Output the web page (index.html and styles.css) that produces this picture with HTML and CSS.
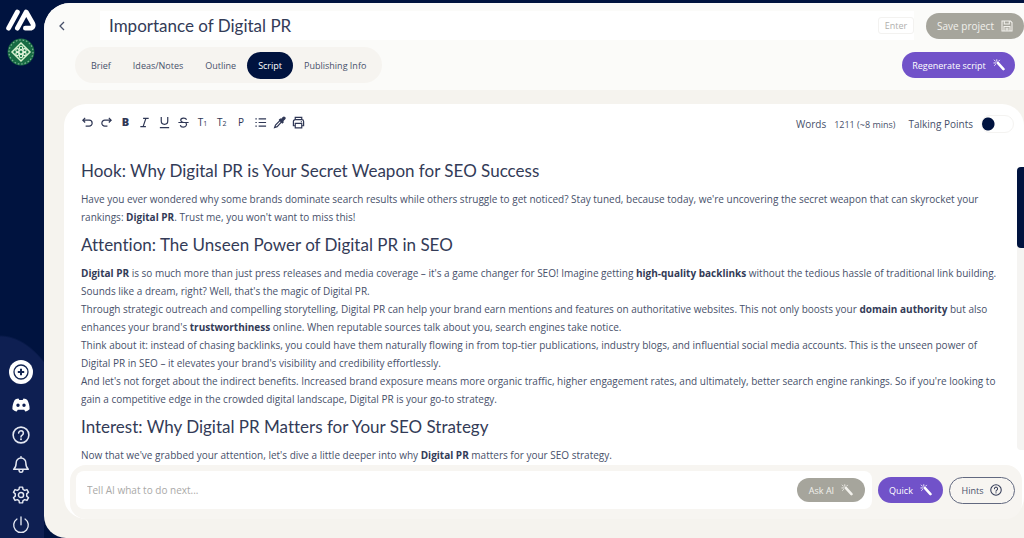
FILE: index.html
```html
<!DOCTYPE html>
<html lang="en">
<head>
<meta charset="utf-8">
<meta name="viewport" content="width=device-width, initial-scale=1">
<title>Importance of Digital PR</title>
<link rel="stylesheet" href="styles.css">
</head>
<body>
<svg class="defs" aria-hidden="true">
  <symbol id="wand" viewBox="0 0 14 14"><path d="M5.600 4.600 12.200 11.800" stroke="currentColor" stroke-width="3" stroke-linecap="round"/><path d="M1 4.600h2M4.400.8v1.800M1.400 1.200l1.400 1.400M7.600 1.400 6.600 2.500M1.800 7.600l1.200-1.200" stroke="currentColor" stroke-width="1" stroke-linecap="round"/></symbol>
  <symbol id="help" viewBox="0 0 16 16"><circle cx="8" cy="8" r="7" fill="none" stroke="currentColor" stroke-width="1.4"/><path d="M5.900 6.300a2.100 2.100 0 1 1 3.200 1.800c-.8.5-1.100.8-1.100 1.600" fill="none" stroke="currentColor" stroke-width="1.4" stroke-linecap="round"/><circle cx="8" cy="11.800" r=".9" fill="currentColor"/></symbol>
</svg>
<div class="app">
  <nav class="sidebar" aria-label="Main">
    <div class="side-group side-top">
      <a href="#" aria-label="Home"><svg class="logo" viewBox="0 0 30 22" fill="none" stroke="#fff" stroke-width="4.800" stroke-linecap="round" stroke-linejoin="round"><path d="M2.600 19.200 11.400 3M11.400 19.200 20.200 3l6.400 11.200c1.400 2.600.2 5-2.600 5h-4.600"/></svg></a>
      <a href="#" aria-label="Workspace"><svg class="avatar" viewBox="0 0 28 28" fill="none"><circle cx="14" cy="14" r="13.400" fill="#176b43"/><circle cx="14" cy="14" r="12" stroke="#7fb296" stroke-width="1.200" stroke-dasharray="1.600 1.800"/><path d="m14 5 9 9-9 9-9-9z" fill="#1b7a49" stroke="#d8f2cf" stroke-width="1.500"/><g stroke="#e7f7df" stroke-width="1.100"><circle cx="14" cy="14" r="2"/><circle cx="14" cy="10" r="1.700"/><circle cx="14" cy="18" r="1.700"/><circle cx="10.400" cy="12.200" r="1.600"/><circle cx="17.600" cy="12.200" r="1.600"/><circle cx="10.400" cy="16" r="1.600"/><circle cx="17.600" cy="16" r="1.600"/></g></svg></a>
    </div>
    <div class="side-group side-bottom">
      <button class="side-btn add" aria-label="Add"><svg viewBox="0 0 24 24"><circle cx="12" cy="12" r="12" fill="#fff"/><circle cx="12" cy="12" r="7" fill="none" stroke="#142653" stroke-width="1.300"/><path d="M12 8.800v6.400M8.800 12h6.400" stroke="#142653" stroke-width="2"/></svg></button>
      <button class="side-btn" aria-label="Discord"><svg viewBox="0 0 18 18"><path fill="#fff" fill-rule="evenodd" d="M6.500 2.600C4.700 2.900 3.400 3.400 2.700 3.900 1.200 6.300.4 9.500.4 13.200c1.300 1.300 2.700 2 4.300 2.300l1.100-1.800h6.400l1.100 1.800c1.600-.3 3-1 4.300-2.300 0-3.700-.8-6.900-2.300-9.300-.7-.5-2-1-3.800-1.300l-.8 1.500H7.300zM6 7.400a1.700 1.800 0 1 0 0 3.600 1.700 1.800 0 0 0 0-3.600m6 0a1.700 1.800 0 1 0 0 3.600 1.700 1.800 0 0 0 0-3.600"/></svg></button>
      <button class="side-btn" aria-label="Help"><svg><use href="#help"/></svg></button>
      <button class="side-btn" aria-label="Notifications"><svg viewBox="0 0 16 16" fill="none" stroke="currentColor" stroke-width="1.300" stroke-linejoin="round" stroke-linecap="round"><path d="M8 1.800c-2.600 0-4.300 2-4.300 4.400 0 3-.8 4.400-2.200 5.600h13c-1.400-1.200-2.200-2.600-2.200-5.600 0-2.400-1.700-4.400-4.300-4.400zM8 1.800V.6M6.200 12c0 3.400 3.600 3.400 3.600 0"/></svg></button>
      <button class="side-btn" aria-label="Settings"><svg viewBox="0 0 16 16" fill="none" stroke="currentColor" stroke-width="1.300" stroke-linejoin="round"><path d="m6.600 1-.4 2-1.500.9-2-.7-1.400 2.400L2.900 7v2l-1.600 1.400 1.400 2.400 2-.7 1.500.9.400 2h2.800l.4-2 1.500-.9 2 .7 1.400-2.400L13.100 9V7l1.600-1.400-1.400-2.400-2 .7-1.500-.9-.4-2z"/><circle cx="8" cy="8" r="2.300"/></svg></button>
      <button class="side-btn" aria-label="Log out"><svg viewBox="0 0 16 16" fill="none" stroke="currentColor" stroke-width="1.200" stroke-linecap="round"><path d="M8 .8v7M4.400 2.700a6.500 6.500 0 1 0 7.200 0"/></svg></button>
    </div>
  </nav>

  <main class="main">
    <header class="header">
      <div class="title-row">
        <button class="back" aria-label="Back"><svg viewBox="0 0 8 10" fill="none" stroke="currentColor" stroke-width="1.300"><path d="M6 1 2 5l4 4"/></svg></button>
        <div class="title-field">
          <input class="title-input" type="text" aria-label="Project title" value="Importance of Digital PR">
          <button class="enter">Enter</button>
        </div>
        <button class="pill save">Save project<svg viewBox="0 0 12 12" fill="none" stroke="currentColor" stroke-width="1.100"><path d="M1 1h8.500L11 2.500V11H1zM3.300 1v3h5V1M3 11V6.500h6V11M4.500 8.200h3M4.500 9.700h3"/></svg></button>
      </div>
      <div class="tab-row">
        <div class="tabs">
          <button class="tab">Brief</button>
          <button class="tab">Ideas/Notes</button>
          <button class="tab">Outline</button>
          <button class="tab active" aria-current="page">Script</button>
          <button class="tab">Publishing Info</button>
        </div>
        <button class="pill purple regenerate">Regenerate script<svg><use href="#wand"/></svg></button>
      </div>
    </header>

    <section class="editor">
      <div class="editor-bar">
        <div class="tools">
          <button class="tool" aria-label="Undo"><svg viewBox="0 0 14 14"><path d="M4.500 2 2 4.500 4.500 7M2.200 4.500h6.600a3.200 3.200 0 0 1 0 6.400H5"/></svg></button>
          <button class="tool" aria-label="Redo"><svg viewBox="0 0 14 14"><path d="M9.500 2 12 4.500 9.500 7M11.800 4.500H5.200a3.200 3.200 0 0 0 0 6.400H8"/></svg></button>
          <button class="tool bold">B</button>
          <button class="tool" aria-label="Italic"><svg viewBox="0 0 14 14"><path d="M5.500 2.500h6M2.500 11.500h6M8.500 2.500l-3 9"/></svg></button>
          <button class="tool" aria-label="Underline"><svg viewBox="0 0 14 14"><path d="M3.500 1v4.500a3.500 3.500 0 0 0 7 0V1M2 12.500h10"/></svg></button>
          <button class="tool" aria-label="Strikethrough"><svg viewBox="0 0 14 14"><path d="M10.300 4C9.500 1.500 4 1.700 4 4.500c0 1.500 1.500 2 3 2.500M1.500 7h11M9.500 7.500c2 2-.2 4.500-2.700 4.500-1.700 0-2.900-.8-3.200-2.200"/></svg></button>
          <button class="tool">T<small>1</small></button>
          <button class="tool">T<small>2</small></button>
          <button class="tool">P</button>
          <button class="tool" aria-label="List"><svg viewBox="0 0 14 14"><path d="M5 3h8M5 7h8M5 11h8M1.500 3H3M1.500 7H3M1.500 11H3"/></svg></button>
          <button class="tool" aria-label="Highlight"><svg viewBox="0 0 14 14"><path d="m8 4.500 1.500 1.500-5 5.500-2.800 1 1-2.800z"/><path class="solid" d="m7 4.300 1-1 .8.700L11 1.500c1-1 2.600.5 1.700 1.600L10.300 5.500l.7.800-1 1z"/></svg></button>
          <button class="tool" aria-label="Print"><svg viewBox="0 0 14 14"><path d="M3.500 4V1.500h7V4M3.500 10.500h-2V6a2 2 0 0 1 2-2h7a2 2 0 0 1 2 2v4.500h-2M3.500 8h7v4.800h-7zM9.500 6h1"/></svg></button>
        </div>
        <div class="stats">
          <span>Words</span><span class="count">1211 (~8 mins)</span>
          <label for="talking">Talking Points</label>
          <input class="switch" id="talking" type="checkbox">
        </div>
      </div>
      <div class="viewport">
        <article class="doc">
          <h2>Hook: Why Digital PR is Your Secret Weapon for SEO Success</h2>
          <p>Have you ever wondered why some brands dominate search results while others struggle to get noticed? Stay tuned, because today, we're uncovering the secret weapon that can skyrocket your rankings: <strong>Digital PR</strong>. Trust me, you won't want to miss this!</p>
          <h2>Attention: The Unseen Power of Digital PR in SEO</h2>
          <p><strong>Digital PR</strong> is so much more than just press releases and media coverage – it's a game changer for SEO! Imagine getting <strong>high-quality backlinks</strong> without the tedious hassle of traditional link building. Sounds like a dream, right? Well, that's the magic of Digital PR.</p>
          <p>Through strategic outreach and compelling storytelling, Digital PR can help your brand earn mentions and features on authoritative websites. This not only boosts your <strong>domain authority</strong> but also enhances your brand's <strong>trustworthiness</strong> online. When reputable sources talk about you, search engines take notice.</p>
          <p>Think about it: instead of chasing backlinks, you could have them naturally flowing in from top-tier publications, industry blogs, and influential social media accounts. This is the unseen power of Digital PR in SEO – it elevates your brand's visibility and credibility effortlessly.</p>
          <p>And let's not forget about the indirect benefits. Increased brand exposure means more organic traffic, higher engagement rates, and ultimately, better search engine rankings. So if you're looking to<br>gain a competitive edge in the crowded digital landscape, Digital PR is your go-to strategy.</p>
          <h2>Interest: Why Digital PR Matters for Your SEO Strategy</h2>
          <p>Now that we've grabbed your attention, let's dive a little deeper into why <strong>Digital PR</strong> matters for your SEO strategy.</p>
        </article>
        <div class="track"><div class="thumb"></div></div>
      </div>
      <form class="ai-bar">
        <div class="ai-field">
          <input class="ai-input" type="text" aria-label="Tell AI what to do next" placeholder="Tell AI what to do next...">
          <button type="button" class="pill ask">Ask AI<svg><use href="#wand"/></svg></button>
        </div>
        <button type="button" class="pill purple quick">Quick<svg><use href="#wand"/></svg></button>
        <button type="button" class="pill hints">Hints<svg><use href="#help"/></svg></button>
      </form>
    </section>
  </main>
</div>
</body>
</html>
```

FILE: styles.css
```css
* { box-sizing: border-box; }
body {
  margin: 0;
  font-family: "Open Sans", "Noto Sans", sans-serif;
  font-size: 10px;
  color: #47506a;
  background: #00133f;
}
button, input { font: inherit; color: inherit; margin: 0; }
button { border: 0; padding: 0; background: none; cursor: pointer; white-space: nowrap; }
svg { display: block; fill: none; }
.defs { position: absolute; width: 0; height: 0; }

.app { display: flex; height: 100vh; padding-top: 3px; background: #00133f; }
.sidebar {
  flex: 0 0 44px;
  display: flex;
  flex-direction: column;
  justify-content: space-between;
  margin-top: -3px;
  background: radial-gradient(ellipse 90px 203px at 0 100%, #0e1f52 0, #0e1f52 99%, #00133f 100%);
}
.side-group { display: flex; flex-direction: column; align-items: center; padding-right: 3px; }
.side-top { gap: 7px; padding-top: 9px; }
.side-bottom { gap: 12px; padding-bottom: 4px; color: #e4e8f2; }
.logo { width: 30px; height: 22px; }
.avatar { width: 28px; height: 28px; }
.side-btn svg { width: 18px; height: 18px; }
.side-btn.add svg { width: 24px; height: 24px; }

.main {
  flex: 1;
  min-width: 0;
  display: flex;
  flex-direction: column;
  background: #f5f3ee;
  border-radius: 26px 0 0 22px;
  overflow: hidden;
}
.header { background: #fbfbf9; padding-bottom: 7px; }
.title-row { display: flex; align-items: center; padding: 8px 0 0 10px; }
.back { width: 16px; height: 28px; display: grid; place-items: center; }
.back svg { width: 8px; height: 10px; }
.title-field { flex: 1; display: flex; align-items: center; margin: 0 12px 0 30px; background: #fff; }
.title-input {
  flex: 1;
  min-width: 0;
  height: 29px;
  padding: 0 9px;
  border: 0;
  background: none;
  font-family: Lato, sans-serif;
  font-size: 17px;
  color: #333b57;
}
.enter { width: 36px; height: 17px; border: 1px solid #f3f2f0; border-radius: 3px; font-size: 9px; line-height: 12px; color: #b0afad; }

.pill { display: flex; align-items: center; justify-content: center; gap: 7px; border-radius: 14px; color: #fff; font-size: 9px; }
.pill svg { width: 12px; height: 12px; flex: none; }
.save { width: 98px; height: 26px; background: #a6a59c; font-size: 10px; color: #f2f1ec; }
.purple { background: #7152c9; }

.tab-row { display: flex; align-items: center; justify-content: space-between; padding: 7px 9px 0 31px; }
.tabs { display: flex; align-items: center; height: 36px; padding: 0 5px; border-radius: 18px; background: #f6f4f0; }
.tab { height: 27px; padding: 0 11px; border-radius: 14px; font-size: 9px; }
.tab.active { background: #00133f; color: #fff; }
.regenerate { width: 113px; height: 26px; }

.editor {
  flex: 1;
  min-height: 0;
  display: flex;
  flex-direction: column;
  margin: 14px 0 19px 20px;
  border-radius: 22px;
  background: #fff;
}
.editor-bar { display: flex; align-items: flex-start; justify-content: space-between; padding: 9px 10px 0 16px; height: 30px; }
.tools { display: flex; justify-content: space-between; width: 226px; color: #2f3755; }
.tool { width: 14px; height: 18px; display: flex; align-items: center; justify-content: center; line-height: 12px; }
.tool svg { width: 13px; height: 13px; stroke: currentColor; stroke-width: 1.3; }
.tool small { font-size: 7px; line-height: 8px; padding-top: 4px; }
.tool .solid { fill: currentColor; }
.bold { font-weight: 800; font-size: 11px; }
.stats { display: flex; align-items: center; gap: 8px; padding-top: 2px; }
.count { font-size: 9px; }
.stats label { margin-left: 5px; }
.switch {
  appearance: none;
  width: 33px;
  height: 18px;
  border: 1px solid #f4f3f1;
  border-radius: 9px;
  background: radial-gradient(circle at 6px 50%, #00133f 6px, transparent 7px);
}

.viewport { flex: 1; min-height: 0; display: flex; justify-content: space-between; padding-top: 25px; }
.doc { flex: 1; min-width: 0; overflow: hidden; padding: 0 15px 0 17px; }
.doc h2 { margin: 0; padding: 0 0 7px; font-family: Lato, sans-serif; font-size: 17px; line-height: 24px; font-weight: 400; font-variant-ligatures: none; color: #333b57; }
.doc p { margin: 0; line-height: 18px; }
.doc p + h2 { padding-top: 7px; }
.doc strong { color: #333b57; }
.track { width: 7px; margin: 8px 0 15px; border-radius: 4px 0 0 4px; background: #f5f4f2; }
.thumb { height: 81px; border-radius: 4px 0 0 4px; background: #00133f; }

.ai-bar {
  display: flex;
  align-items: center;
  gap: 6px;
  height: 54px;
  margin: 0 2px 0 6px;
  padding: 0 7px 4px 6px;
  border-radius: 16px;
  background: #f7f5f1;
}
.ai-field { flex: 1; display: flex; align-items: center; height: 38px; padding-right: 7px; border-radius: 8px; background: #fff; }
.ai-input { flex: 1; min-width: 0; padding: 0 11px; border: 0; background: none; outline-offset: 4px; }
.ai-input::placeholder { color: #aaa9a7; opacity: 1; }
.ask { width: 68px; height: 24px; background: #a6a59c; color: #f2f1ec; }
.quick { width: 65px; height: 26px; }
.hints { width: 66px; height: 27px; border: 1px solid #626980; color: #47506a; }
.hints svg { color: #333b57; }
```
